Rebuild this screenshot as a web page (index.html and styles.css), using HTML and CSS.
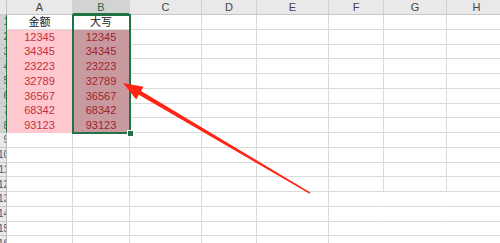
FILE: index.html
```html
<!DOCTYPE html>
<html>
<head>
<meta charset="utf-8">
<link rel="stylesheet" href="styles.css">
</head>
<body>
<div class="sheet">
  <div class="row hdr">
    <div class="c rh corner"></div>
    <div class="c a">A</div>
    <div class="c b selh">B</div>
    <div class="c cc">C</div>
    <div class="c d">D</div>
    <div class="c e">E</div>
    <div class="c f">F</div>
    <div class="c g">G</div>
    <div class="c h">H</div>
  </div>
  <div class="row"><div class="c rh sel"><span>1</span></div><div class="c a">金额</div><div class="c b">大写</div><div class="c cc"></div><div class="c d"></div><div class="c e"></div><div class="c f"></div><div class="c g"></div><div class="c h"></div></div>
  <div class="row"><div class="c rh sel"><span>2</span></div><div class="c a red">12345</div><div class="c b redsel">12345</div><div class="c cc"></div><div class="c d"></div><div class="c e"></div><div class="c f"></div><div class="c g"></div><div class="c h"></div></div>
  <div class="row"><div class="c rh sel"><span>3</span></div><div class="c a red">34345</div><div class="c b redsel">34345</div><div class="c cc"></div><div class="c d"></div><div class="c e"></div><div class="c f"></div><div class="c g"></div><div class="c h"></div></div>
  <div class="row"><div class="c rh sel"><span>4</span></div><div class="c a red">23223</div><div class="c b redsel">23223</div><div class="c cc"></div><div class="c d"></div><div class="c e"></div><div class="c f"></div><div class="c g"></div><div class="c h"></div></div>
  <div class="row"><div class="c rh sel"><span>5</span></div><div class="c a red">32789</div><div class="c b redsel">32789</div><div class="c cc"></div><div class="c d"></div><div class="c e"></div><div class="c f"></div><div class="c g"></div><div class="c h"></div></div>
  <div class="row"><div class="c rh sel"><span>6</span></div><div class="c a red">36567</div><div class="c b redsel">36567</div><div class="c cc"></div><div class="c d"></div><div class="c e"></div><div class="c f"></div><div class="c g"></div><div class="c h"></div></div>
  <div class="row"><div class="c rh sel"><span>7</span></div><div class="c a red">68342</div><div class="c b redsel">68342</div><div class="c cc"></div><div class="c d"></div><div class="c e"></div><div class="c f"></div><div class="c g"></div><div class="c h"></div></div>
  <div class="row"><div class="c rh sel"><span>8</span></div><div class="c a red">93123</div><div class="c b redsel">93123</div><div class="c cc"></div><div class="c d"></div><div class="c e"></div><div class="c f"></div><div class="c g"></div><div class="c h"></div></div>
  <div class="row"><div class="c rh"><span>9</span></div><div class="c a"></div><div class="c b"></div><div class="c cc"></div><div class="c d"></div><div class="c e"></div><div class="c f"></div><div class="c g"></div><div class="c h"></div></div>
  <div class="row"><div class="c rh"><span>10</span></div><div class="c a"></div><div class="c b"></div><div class="c cc"></div><div class="c d"></div><div class="c e"></div><div class="c f"></div><div class="c g"></div><div class="c h"></div></div>
  <div class="row"><div class="c rh"><span>11</span></div><div class="c a"></div><div class="c b"></div><div class="c cc"></div><div class="c d"></div><div class="c e"></div><div class="c f"></div><div class="c g"></div><div class="c h"></div></div>
  <div class="row"><div class="c rh"><span>12</span></div><div class="c a"></div><div class="c b"></div><div class="c cc"></div><div class="c d"></div><div class="c e"></div><div class="c f"></div><div class="c g"></div><div class="c h"></div></div>
  <div class="row bare"><div class="c rh"><span>13</span></div><div class="c a"></div><div class="c b"></div><div class="c cc"></div><div class="c d"></div><div class="c e"></div><div class="c f"></div><div class="c g"></div><div class="c h"></div></div>
  <div class="row bare"><div class="c rh"><span>14</span></div><div class="c a"></div><div class="c b"></div><div class="c cc"></div><div class="c d"></div><div class="c e"></div><div class="c f"></div><div class="c g"></div><div class="c h"></div></div>
  <div class="row bare"><div class="c rh"><span>15</span></div><div class="c a"></div><div class="c b"></div><div class="c cc"></div><div class="c d"></div><div class="c e"></div><div class="c f"></div><div class="c g"></div><div class="c h"></div></div>
  <div class="row bare"><div class="c rh"><span>16</span></div><div class="c a"></div><div class="c b"></div><div class="c cc"></div><div class="c d"></div><div class="c e"></div><div class="c f"></div><div class="c g"></div><div class="c h"></div></div>

  <div class="selection"></div>
  <div class="handle"></div>
  <svg class="arrow" width="500" height="243" viewBox="0 0 500 243">
    <polygon fill="#ff2414" points="123,83 143.5,86.8 141,91 310.4,192.6 309.6,193.8 138.8,94.8 136.2,99.6"/>
  </svg>
</div>
</body>
</html>
```

FILE: styles.css
```css
html, body {
  margin: 0;
  padding: 0;
  background: #ffffff;
  overflow: hidden;
}
.sheet {
  position: relative;
  width: 500px;
  height: 243px;
  overflow: hidden;
  font-family: "Liberation Sans", Arial, "Noto Sans CJK SC", sans-serif;
  font-size: 11px;
}
.row {
  display: flex;
  height: 14.75px;
}
.row.hdr {
  height: 15px;
  background: #e9e9e9;
}
.c {
  flex: none;
  box-sizing: border-box;
  border-right: 1px solid #dadada;
  border-bottom: 1px solid #dadada;
  display: flex;
  align-items: center;
  justify-content: center;
  color: #222;
  white-space: nowrap;
  overflow: hidden;
  line-height: 1;
  padding-top: 1px;
}
.rh { width: 7px; background: #e9e9e9; border-right-color: #b9b9b9; border-bottom-color: #c8c8c8; justify-content: flex-end; color: #3b5b7d; font-size: 10px; }
.rh span { flex: none; margin-right: -3px; }
.rh.sel { background: #d2d2d2; border-right: 1px solid #217346; color: #2f6b52; }
.a { width: 66px; }
.b { width: 57px; }
.cc { width: 72px; }
.d { width: 55px; }
.e { width: 72px; }
.f { width: 55px; }
.g { width: 63px; }
.h { width: 60px; }
.hdr .c { color: #444; border-bottom-color: #c6c6c6; border-right-color: #d0d0d0; }
.hdr .selh { background: #d3d3d3; border-bottom: 2px solid #217346; color: #2a6a4c; }
.hdr .corner { border-right-color: #c6c6c6; }
.red { background: #ffc7ce; color: #c72f3d; border-right-color: #ffc7ce; border-bottom-color: #ffc7ce; }
.redsel { background: #c89aa0; color: #a0232f; border-bottom-color: #c89aa0; }
.bare .f, .bare .g { border-right-color: transparent; }
.selection {
  position: absolute;
  left: 72px;
  top: 14px;
  width: 59px;
  height: 120px;
  box-sizing: border-box;
  border: 2px solid #217346;
}
.handle {
  position: absolute;
  left: 128px;
  top: 131px;
  width: 5px;
  height: 5px;
  background: #217346;
  box-shadow: 0 0 0 1px #ffffff;
}
.arrow {
  position: absolute;
  left: 0;
  top: 0;
}
```
